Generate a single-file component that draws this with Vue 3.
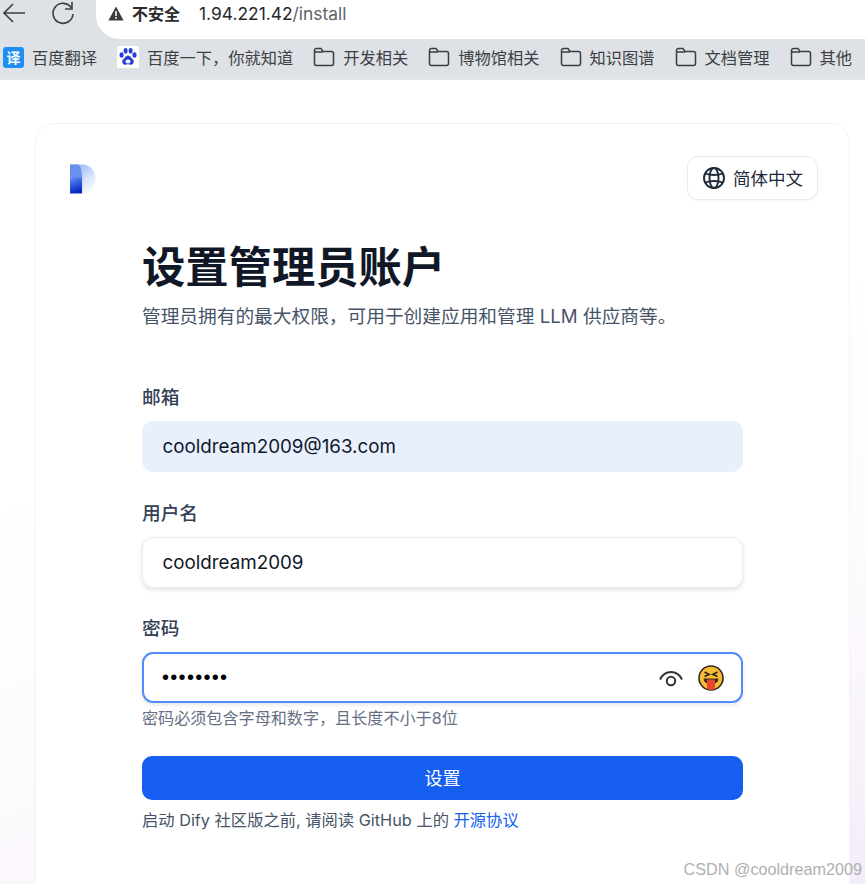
<script setup>
const bookmarks = ['开发相关', '博物馆相关', '知识图谱', '文档管理', '其他']
</script>

<template>
  <div class="page">
    <header class="chrome">
      <div class="toolbar">
        <svg class="nav back" width="26" height="26" viewBox="0 0 26 26" fill="none" stroke="#3c3f44" stroke-width="1.600">
          <path d="M24 13H3M12 4l-9 9 9 9" />
        </svg>
        <svg class="nav reload" width="26" height="26" viewBox="0 0 26 26" fill="none" stroke="#3c3f44" stroke-width="1.600">
          <path d="M21.500 8A10 10 0 1 0 23 14" />
          <path d="M22 2v7h-7" />
        </svg>
        <div class="address">
          <svg width="16" height="15" viewBox="0 0 16 15"><path d="M8 0.500L15.600 14.500H0.400Z" fill="#3a3a3a" /><path d="M7.200 5h1.600v5H7.200zM7.200 11h1.600v1.700H7.200z" fill="#fff" /></svg>
          <span class="insecure">不安全</span>
          <span class="url"><span class="host">1.94.221.42</span>/install</span>
        </div>
      </div>
      <nav class="bookmarks">
        <div class="bookmark first">
          <span class="translate">译</span>
          <span>百度翻译</span>
        </div>
        <div class="bookmark second">
          <svg class="paw" width="22" height="22" viewBox="0 0 22 22">
            <rect width="22" height="22" fill="#fff" />
            <g fill="#2a3fd6">
              <ellipse cx="4.600" cy="9" rx="2.100" ry="2.800" />
              <ellipse cx="8.600" cy="4.800" rx="2" ry="2.800" />
              <ellipse cx="13.600" cy="4.800" rx="2" ry="2.800" />
              <ellipse cx="17.500" cy="9" rx="2.100" ry="2.800" />
              <path d="M11 9.500c2.200 0 3 2.300 4.600 3.600 2 1.600 1.400 5.600-1.600 5.600-1.200 0-2-.5-3-.5s-1.800.5-3 .5c-3 0-3.600-4-1.600-5.600C8 11.800 8.800 9.500 11 9.500z" />
            </g>
            <ellipse cx="11" cy="15.600" rx="2.500" ry="2" fill="#fff" />
          </svg>
          <span>百度一下，你就知道</span>
        </div>
        <div v-for="name in bookmarks" :key="name" class="bookmark">
          <svg width="22" height="20" viewBox="0 0 22 20" fill="none" stroke="#3b3d41" stroke-width="1.500">
            <path d="M1.500 5V3.500A2 2 0 0 1 3.500 1.500H8l2 3h8.500a2 2 0 0 1 2 2V16.500a2 2 0 0 1-2 2H3.500a2 2 0 0 1-2-2Z" />
            <path d="M1.500 5H10" />
          </svg>
          <span>{{ name }}</span>
        </div>
      </nav>
    </header>

    <main class="content">
      <section class="card">
        <div class="card-top">
          <svg class="logo" width="26" height="30" viewBox="0 0 27 30">
            <defs>
              <linearGradient id="logoLeft" x1="0" y1="0" x2="0.300" y2="1">
                <stop offset="0" stop-color="#6f95f0" />
                <stop offset="0.500" stop-color="#2f5fe0" />
                <stop offset="1" stop-color="#0a26bd" />
              </linearGradient>
              <linearGradient id="logoRight" x1="0.100" y1="0" x2="0.800" y2="1">
                <stop offset="0" stop-color="#8fb0f6" />
                <stop offset="0.600" stop-color="#d6e3fd" />
                <stop offset="1" stop-color="#ffffff" />
              </linearGradient>
            </defs>
            <path d="M0 0h13a13.500 14 0 0 1 13.500 14v2A13.500 14 0 0 1 13 30H0Z" fill="url(#logoRight)" />
            <path d="M0 13h12.500v17H0Z" fill="url(#logoLeft)" />
            <path d="M0 0h8a4.500 13 0 0 1 4.500 13H0Z" fill="#6a90ef" />
          </svg>
          <button class="lang">
            <svg width="24" height="24" viewBox="0 0 24 24" fill="none" stroke="#1f2a3a" stroke-width="1.900">
              <circle cx="12" cy="12" r="10" />
              <ellipse cx="12" cy="12" rx="4.500" ry="10" />
              <path d="M3.500 7.500C8 9.500 16 9.500 20.500 7.500M3.500 16.500C8 14.500 16 14.500 20.500 16.500" />
            </svg>
            <span>简体中文</span>
          </button>
        </div>

        <div class="form">
          <h1>设置管理员账户</h1>
          <p class="subtitle">管理员拥有的最大权限，可用于创建应用和管理 LLM 供应商等。</p>

          <label class="label email-label">邮箱</label>
          <div class="field filled">cooldream2009@163.com</div>

          <label class="label">用户名</label>
          <div class="field">cooldream2009</div>

          <label class="label">密码</label>
          <div class="field focus">
            <span class="dots">••••••••</span>
            <svg class="eye" width="26" height="18" viewBox="0 0 26 18" fill="none" stroke="#333" stroke-width="2">
              <path d="M2 9.500C5 3.500 9 2 13 2s8 1.500 11 7.500" />
              <circle cx="13" cy="11" r="4.200" />
            </svg>
            <svg class="emoji" width="26" height="26" viewBox="0 0 26 26">
              <circle cx="13" cy="13" r="12" fill="#f7bd37" stroke="#30281a" stroke-width="1.600" />
              <path d="M6.500 7l4.500 2.500-4.500 2M19.500 7L15 9.500l4.500 2" fill="none" stroke="#30281a" stroke-width="1.800" />
              <path d="M5.500 13.500h15a7.500 6 0 0 1-15 0Z" fill="#3a2a18" />
              <path d="M9 14.500h8v7a4 3.500 0 0 1-8 0Z" fill="#e8452c" />
            </svg>
          </div>
          <p class="hint">密码必须包含字母和数字，且长度不小于8位</p>

          <button class="submit">设置</button>
          <p class="terms">启动 Dify 社区版之前, 请阅读 GitHub 上的 <span class="link">开源协议</span></p>
        </div>
      </section>
    </main>
    <div class="watermark">CSDN @cooldream2009</div>
  </div>
</template>

<style scoped>
.page {
  position: relative;
  width: 865px;
  height: 884px;
  overflow: hidden;
  background: linear-gradient(165deg, #ffffff 45%, #fcf9fd 75%, #f3ecfa 100%);
  font-family: "Inter", "Noto Sans CJK SC", sans-serif;
  color: #1d2939;
}
.chrome {
  background: #dee1e6;
  height: 80px;
  border-bottom: 1px solid #e6e7ea;
  box-sizing: border-box;
}
.toolbar {
  height: 34px;
  display: flex;
  align-items: flex-start;
}
.nav { flex: none; }
.back { margin-left: 1px; }
.reload { margin-left: 23px; }
.address {
  margin-left: 20px;
  flex: 1;
  height: 33px;
  background: #fff;
  border-radius: 0 0 0 24px;
  display: flex;
  align-items: flex-start;
  padding: 6px 0 0 12px;
  gap: 8px;
  line-height: 16px;
}
.address svg { flex: none; }
.insecure { font-weight: 600; color: #2c2c2c; margin-right: 11px; font-size: 16px; }
.url { color: #5f6368; font-size: 17.400px; }
.host { color: #26282c; }
.bookmarks {
  height: 46px;
  display: flex;
  align-items: center;
  padding-left: 3px;
  font-size: 16.250px;
  color: #3c3f44;
  white-space: nowrap;
}
.bookmark {
  display: flex;
  align-items: center;
  gap: 8px;
  margin-right: 20px;
}
.translate {
  width: 21px;
  height: 21px;
  background: #1d8ff2;
  border-radius: 3px;
  color: #fff;
  font-size: 14px;
  font-weight: 700;
  display: flex;
  align-items: center;
  justify-content: center;
}
.content { padding: 43px 15px 0 35px; }
.card {
  background: #fff;
  border: 1px solid #f3f3f6;
  border-radius: 20px;
  height: 800px;
  box-sizing: border-box;
  padding: 32px 31px 0 34px;
}
.card-top {
  display: flex;
  justify-content: space-between;
  align-items: flex-start;
}
.logo { margin-top: 8px; }
.lang {
  width: 131px;
  height: 44px;
  background: #fff;
  border: 1px solid #e9ebef;
  border-radius: 11px;
  box-shadow: 0 1px 2px rgba(16, 24, 40, 0.04);
  display: flex;
  align-items: center;
  justify-content: center;
  gap: 7px;
  font: inherit;
  font-size: 17.500px;
  color: #1d2939;
  padding: 0 0 1px;
}
.form {
  width: 601px;
  margin: 37px 0 0 72px;
}
h1 {
  margin: 0;
  font-size: 43.300px;
  line-height: 60px;
  font-weight: 700;
  color: #101828;
}
.subtitle {
  margin: 7px 0 0;
  font-size: 18.700px;
  line-height: 26px;
  color: #475467;
  white-space: nowrap;
}
.label {
  display: block;
  margin-top: 28.500px;
  margin-bottom: 10px;
  font-size: 18.700px;
  line-height: 26px;
  font-weight: 500;
  color: #344054;
}
.email-label { margin-top: 55px; }
.field {
  height: 51px;
  box-sizing: border-box;
  border-radius: 11px;
  padding: 0 19.500px;
  display: flex;
  align-items: center;
  font-size: 18.800px;
  color: #101828;
  background: #fff;
  border: 1px solid #eceef2;
  box-shadow: 0 2px 4px rgba(16, 24, 40, 0.12);
}
.filled {
  background: #e8f0fe;
  border-color: #e8f0fe;
  box-shadow: none;
}
.focus {
  border: 2px solid #528bff;
  box-shadow: 0 2px 4px rgba(16, 24, 40, 0.1);
  padding: 0 17px 0 18px;
}
.dots {
  flex: 1;
  font-size: 20px;
  font-family: "Liberation Sans", sans-serif;
  color: #000;
  letter-spacing: 1.300px;
}
.eye { margin-right: 14px; margin-top: 2px; }
.hint {
  margin: 3px 0 0;
  font-size: 16.100px;
  line-height: 24px;
  color: #667085;
  white-space: nowrap;
}
.submit {
  display: block;
  width: 100%;
  height: 44px;
  margin-top: 26px;
  border: none;
  border-radius: 10px;
  background: #155eef;
  color: #fff;
  font: inherit;
  font-size: 18px;
  font-weight: 400;
  padding: 0 0 2px;
}
.terms {
  margin: 8px 0 0;
  font-size: 16.300px;
  line-height: 24px;
  color: #475467;
  white-space: nowrap;
}
.link { color: #155eef; }
.watermark {
  position: absolute;
  right: 3px;
  bottom: 5px;
  font-family: "Liberation Sans", sans-serif;
  font-size: 16.200px;
  color: #b0b0b0;
}
</style>
